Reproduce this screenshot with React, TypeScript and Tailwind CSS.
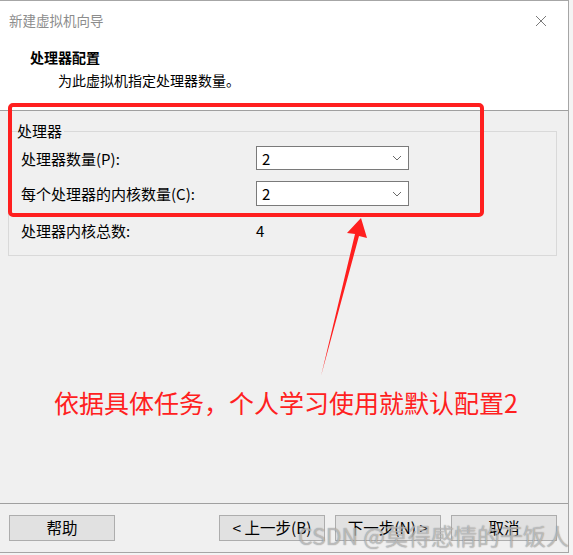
import React from "react";

const font = { fontFamily: '"Noto Sans CJK SC", "Noto Sans", sans-serif' };

function Chevron() {
  return (
    <svg width="10" height="6" viewBox="0 0 10 6" className="block">
      <polyline points="1,1 5,5 9,1" fill="none" stroke="#6a6a6a" strokeWidth="1" />
    </svg>
  );
}

function Select({ value, className = "" }: { value: string; className?: string }) {
  return (
    <div className={`flex w-[153px] items-center justify-between border border-[#7a7a7a] bg-white pl-[5px] pr-[6px] ${className}`}>
      <span className="text-[15px] leading-none text-black">{value}</span>
      <Chevron />
    </div>
  );
}

function Btn({ children }: { children: React.ReactNode }) {
  return (
    <div className="flex h-[26px] w-[106px] items-center justify-center border border-[#adadad] bg-[#e1e1e1] text-[15.5px] leading-none text-black">
      {children}
    </div>
  );
}

export default function App() {
  return (
    <div className="relative h-[555px] w-[573px] overflow-hidden bg-[#f4f4f4]" style={font}>
      <div className="flex h-[553px] w-[569px] flex-col border-t border-r border-b border-[#a6a6a6] bg-[#f0f0f0]">
        {/* title bar */}
        <div className="flex h-[39px] shrink-0 items-center justify-between bg-white pl-[9px] pr-[21px]">
          <span className="text-[13.5px] text-[#8c8c8c]">新建虚拟机向导</span>
          <svg width="12" height="12" viewBox="0 0 12 12">
            <path d="M1 1 L11 11 M11 1 L1 11" stroke="#7a7a7a" strokeWidth="1" />
          </svg>
        </div>
        {/* header */}
        <div className="h-[71px] shrink-0 border-b border-[#a0a0a0] bg-white pt-[7px]">
          <div className="pl-[30px] text-[14px] font-bold leading-[20px] text-black">处理器配置</div>
          <div className="mt-[3px] pl-[58px] text-[14px] leading-[20px] text-black">为此虚拟机指定处理器数量。</div>
        </div>
        {/* body */}
        <div className="flex-1 bg-[#f0f0f0]">
          <div className="relative ml-[8px] mt-[20px] h-[125px] w-[549px] border border-[#d9d9d9] pl-[12px] pt-[14px]">
            <div className="absolute left-[8px] top-[-11px] bg-[#f0f0f0] pr-[2px] text-[15px] leading-[20px] text-black">处理器</div>
            <div className="grid h-[24px] grid-cols-[235px_153px] items-center">
              <span className="text-[15px] leading-none text-black">处理器数量(P):</span>
              <Select value="2" className="h-[24px]" />
            </div>
            <div className="mt-[11px] grid h-[25px] grid-cols-[235px_153px] items-center">
              <span className="text-[15px] leading-none text-black">每个处理器的内核数量(C):</span>
              <Select value="2" className="h-[25px]" />
            </div>
            <div className="mt-[12px] grid h-[24px] grid-cols-[235px_153px] items-center">
              <span className="text-[15px] leading-none text-black">处理器内核总数:</span>
              <span className="text-[15px] leading-none text-black">4</span>
            </div>
          </div>
        </div>
        {/* footer */}
        <div className="flex shrink-0 items-center border-t border-[#a0a0a0] bg-[#f0f0f0] pb-[11px] pl-[9px] pr-[11px] pt-[11px]">
          <Btn>帮助</Btn>
          <div className="flex-1" />
          <div className="flex gap-[10px]">
            <Btn>&lt; 上一步(B)</Btn>
            <Btn>下一步(N) &gt;</Btn>
            <Btn>取消</Btn>
          </div>
        </div>
      </div>

      {/* annotations */}
      <div className="pointer-events-none absolute left-[8px] top-[103px] h-[114px] w-[476px] rounded-[5px] border-[4px] border-[#ff1f1f]" />
      <svg className="pointer-events-none absolute left-0 top-0" width="573" height="555" viewBox="0 0 573 555">
        <polygon points="361,218 367,238 359,236 321,376 355,234 347,233" fill="#ff1f1f" />
      </svg>
      <div className="pointer-events-none absolute left-[54px] top-[386px] whitespace-nowrap text-[25px] leading-[32px] text-[#ff2020]">
        依据具体任务，个人学习使用就默认配置2
      </div>
      <div className="pointer-events-none absolute left-[298px] top-[521px] whitespace-nowrap text-[23px] leading-[28px] text-[rgba(235,235,235,0.55)] [text-shadow:0_0_1px_rgba(80,80,80,0.75)]">
        CSDN @莫得感情的干饭人
      </div>
    </div>
  );
}
